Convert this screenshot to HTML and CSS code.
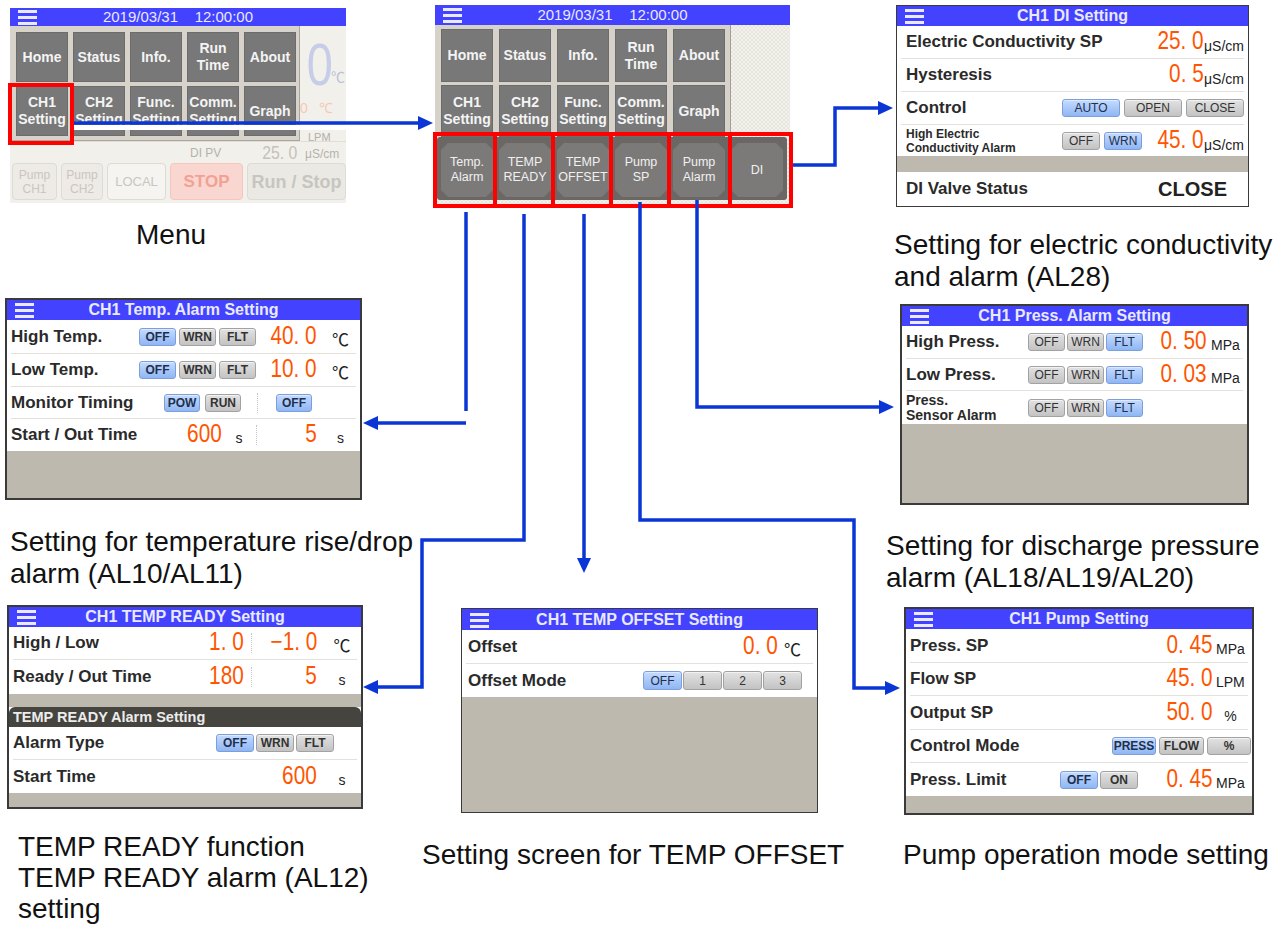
FILE: index.html
```html
<!DOCTYPE html>
<html lang="en">
<head>
  <meta charset="UTF-8">
  <title>CH1 Setting screens</title>
  <link rel="stylesheet" href="styles.css">
</head>
<body>
<div class="canvas">

  <!-- Menu: home screen with the menu open -->
  <div class="screen p-menu">
    <div class="bar clock">
      <svg class="ham" width="19" height="16" viewBox="0 0 19 16"><rect y="1" width="19" height="3"/><rect y="7" width="19" height="3"/><rect y="13" width="19" height="3"/></svg>
      <span class="ttl">2019/03/31&nbsp;&nbsp;&nbsp;&nbsp;12:00:00</span>
    </div>
    <div class="home">
      <div class="home-top">
        <div class="home-side">
          <div class="big-pv"><span class="n">0</span><span class="u">℃</span></div>
          <div class="small-sv">0&nbsp;&nbsp;&nbsp;℃</div>
          <div class="lpm">LPM</div>
        </div>
      </div>
      <div class="home-di">
        <span class="di-l">DI PV</span>
        <span class="di-v"><span class="n">25. 0</span></span>
        <span class="di-u">μS/cm</span>
      </div>
      <div class="home-btns">
        <div class="hb w45">Pump<br>CH1</div>
        <div class="hb w42">Pump<br>CH2</div>
        <div class="hb local w59">LOCAL</div>
        <div class="hb stop w73">STOP</div>
        <div class="hb run">Run / Stop</div>
      </div>
      <div class="pop">
        <div class="mb">Home</div>
        <div class="mb">Status</div>
        <div class="mb">Info.</div>
        <div class="mb">Run<br>Time</div>
        <div class="mb">About</div>
        <div class="mb">CH1<br>Setting</div>
        <div class="mb">CH2<br>Setting</div>
        <div class="mb">Func.<br>Setting</div>
        <div class="mb">Comm.<br>Setting</div>
        <div class="mb">Graph</div>
      </div>
    </div>
  </div>
  <div class="redbox rb-ch1"></div>

  <!-- CH1 setting menu -->
  <div class="screen p-main">
    <div class="bar clock">
      <svg class="ham" width="19" height="16" viewBox="0 0 19 16"><rect y="1" width="19" height="3"/><rect y="7" width="19" height="3"/><rect y="13" width="19" height="3"/></svg>
      <span class="ttl">2019/03/31&nbsp;&nbsp;&nbsp;&nbsp;12:00:00</span>
    </div>
    <div class="main-top">
      <div class="mgrid">
        <div class="mb">Home</div>
        <div class="mb">Status</div>
        <div class="mb">Info.</div>
        <div class="mb">Run<br>Time</div>
        <div class="mb">About</div>
        <div class="mb">CH1<br>Setting</div>
        <div class="mb">CH2<br>Setting</div>
        <div class="mb">Func.<br>Setting</div>
        <div class="mb">Comm.<br>Setting</div>
        <div class="mb">Graph</div>
      </div>
    </div>
    <div class="strip">
      <div class="sb">Temp.<br>Alarm</div>
      <div class="sb">TEMP<br>READY</div>
      <div class="sb">TEMP<br>OFFSET</div>
      <div class="sb">Pump<br>SP</div>
      <div class="sb">Pump<br>Alarm</div>
      <div class="sb">DI</div>
    </div>
  </div>
  <div class="redrow">
    <div class="w64"></div><div class="w62"></div><div class="w62"></div><div class="w62"></div><div class="w65"></div><div class="w65"></div>
  </div>

  <!-- DI setting -->
  <div class="screen p-di">
    <div class="bar">
      <svg class="ham" width="19" height="16" viewBox="0 0 19 16"><rect y="1" width="19" height="3"/><rect y="7" width="19" height="3"/><rect y="13" width="19" height="3"/></svg>
      <span class="ttl">CH1 DI Setting</span>
    </div>
    <div class="row r33">
      <span class="lbl">Electric Conductivity SP</span>
      <span class="cell num w80"><span class="v">25. 0</span></span>
      <span class="cell unit mu w40">μS/cm</span>
    </div>
    <div class="row r33">
      <span class="lbl">Hysteresis</span>
      <span class="cell num w80"><span class="v">0. 5</span></span>
      <span class="cell unit mu w40">μS/cm</span>
    </div>
    <div class="row r33">
      <span class="lbl">Control</span>
      <span class="tgs g4">
        <span class="tg on w58">AUTO</span><span class="tg w58">OPEN</span><span class="tg w58">CLOSE</span>
      </span>
    </div>
    <div class="row r31 last">
      <span class="lbl small">High Electric<br>Conductivity Alarm</span>
      <span class="tgs g4">
        <span class="tg w38">OFF</span><span class="tg on w38">WRN</span>
      </span>
      <span class="cell num w62"><span class="v">45. 0</span></span>
      <span class="cell unit mu w40">μS/cm</span>
    </div>
    <div class="band b16"></div>
    <div class="row grow last">
      <span class="lbl">DI Valve Status</span>
      <span class="state">CLOSE</span>
      <span class="gap w17"></span>
    </div>
  </div>

  <!-- Temp. alarm -->
  <div class="screen p-talarm">
    <div class="bar">
      <svg class="ham" width="19" height="16" viewBox="0 0 19 16"><rect y="1" width="19" height="3"/><rect y="7" width="19" height="3"/><rect y="13" width="19" height="3"/></svg>
      <span class="ttl">CH1 Temp. Alarm Setting</span>
    </div>
    <div class="row r34">
      <span class="lbl">High Temp.</span>
      <span class="tgs">
        <span class="tg on w37">OFF</span><span class="tg w37">WRN</span><span class="tg w37">FLT</span>
      </span>
      <span class="cell num w61"><span class="v">40. 0</span></span>
      <span class="cell unit deg w39 pl8">℃</span>
    </div>
    <div class="row r33">
      <span class="lbl">Low Temp.</span>
      <span class="tgs">
        <span class="tg on w37">OFF</span><span class="tg w37">WRN</span><span class="tg w37">FLT</span>
      </span>
      <span class="cell num w61"><span class="v">10. 0</span></span>
      <span class="cell unit deg w39 pl8">℃</span>
    </div>
    <div class="row r32">
      <span class="lbl">Monitor Timing</span>
      <span class="tg on w36">POW</span>
      <span class="gap w5"></span>
      <span class="tg w36">RUN</span>
      <span class="gap w16"></span>
      <span class="dot"></span>
      <span class="gap w18"></span>
      <span class="tg on w36">OFF</span>
      <span class="gap w44"></span>
    </div>
    <div class="row r32 last">
      <span class="lbl">Start / Out Time</span>
      <span class="cell num w60"><span class="v">600</span></span>
      <span class="cell unit w34">s</span>
      <span class="dot"></span>
      <span class="cell num w60"><span class="v">5</span></span>
      <span class="cell unit w39 pl8">s</span>
    </div>
    <div class="fill"></div>
  </div>

  <!-- Press. alarm -->
  <div class="screen p-palarm">
    <div class="bar">
      <svg class="ham" width="19" height="16" viewBox="0 0 19 16"><rect y="1" width="19" height="3"/><rect y="7" width="19" height="3"/><rect y="13" width="19" height="3"/></svg>
      <span class="ttl">CH1 Press. Alarm Setting</span>
    </div>
    <div class="row r33">
      <span class="lbl">High Press.</span>
      <span class="tgs g2">
        <span class="tg w37">OFF</span><span class="tg w37">WRN</span><span class="tg on w37">FLT</span>
      </span>
      <span class="cell num w64"><span class="v">0. 50</span></span>
      <span class="cell unit left w36 pl4">MPa</span>
    </div>
    <div class="row r32">
      <span class="lbl">Low Press.</span>
      <span class="tgs g2">
        <span class="tg w37">OFF</span><span class="tg w37">WRN</span><span class="tg on w37">FLT</span>
      </span>
      <span class="cell num w64"><span class="v">0. 03</span></span>
      <span class="cell unit left w36 pl4">MPa</span>
    </div>
    <div class="row r33 last">
      <span class="lbl two">Press.<br>Sensor Alarm</span>
      <span class="tgs g2">
        <span class="tg w37">OFF</span><span class="tg w37">WRN</span><span class="tg on w37">FLT</span>
      </span>
      <span class="gap w100"></span>
    </div>
    <div class="fill"></div>
  </div>

  <!-- TEMP READY -->
  <div class="screen p-ready">
    <div class="bar">
      <svg class="ham" width="19" height="16" viewBox="0 0 19 16"><rect y="1" width="19" height="3"/><rect y="7" width="19" height="3"/><rect y="13" width="19" height="3"/></svg>
      <span class="ttl">CH1 TEMP READY Setting</span>
    </div>
    <div class="row r33">
      <span class="lbl">High / Low</span>
      <span class="cell num w60"><span class="v">1. 0</span></span>
      <span class="gap w7"></span>
      <span class="dot"></span>
      <span class="cell num w65"><span class="v">−1. 0</span></span>
      <span class="cell unit deg w40 pl10">℃</span>
    </div>
    <div class="row r34 last">
      <span class="lbl">Ready / Out Time</span>
      <span class="cell num w60"><span class="v">180</span></span>
      <span class="gap w7"></span>
      <span class="dot"></span>
      <span class="cell num w65"><span class="v">5</span></span>
      <span class="cell unit w40 pl10">s</span>
    </div>
    <div class="band b13"></div>
    <div class="hdr">TEMP READY Alarm Setting</div>
    <div class="row r33">
      <span class="lbl">Alarm Type</span>
      <span class="tgs g2">
        <span class="tg on w38">OFF</span><span class="tg w38">WRN</span><span class="tg w38">FLT</span>
      </span>
      <span class="gap w23"></span>
    </div>
    <div class="row r33 last">
      <span class="lbl">Start Time</span>
      <span class="cell num w80"><span class="v">600</span></span>
      <span class="cell unit w40 pl10">s</span>
    </div>
    <div class="fill"></div>
  </div>

  <!-- TEMP OFFSET -->
  <div class="screen p-offset">
    <div class="bar">
      <svg class="ham" width="19" height="16" viewBox="0 0 19 16"><rect y="1" width="19" height="3"/><rect y="7" width="19" height="3"/><rect y="13" width="19" height="3"/></svg>
      <span class="ttl">CH1 TEMP OFFSET Setting</span>
    </div>
    <div class="row r34">
      <span class="lbl">Offset</span>
      <span class="cell num w80"><span class="v">0. 0</span></span>
      <span class="cell unit deg left w35 pl6">℃</span>
    </div>
    <div class="row r33 last">
      <span class="lbl">Offset Mode</span>
      <span class="tgs g1">
        <span class="tg on w39">OFF</span><span class="tg w39">1</span><span class="tg w39">2</span><span class="tg w39">3</span>
      </span>
      <span class="gap w11"></span>
    </div>
    <div class="fill"></div>
  </div>

  <!-- Pump setting -->
  <div class="screen p-pump">
    <div class="bar">
      <svg class="ham" width="19" height="16" viewBox="0 0 19 16"><rect y="1" width="19" height="3"/><rect y="7" width="19" height="3"/><rect y="13" width="19" height="3"/></svg>
      <span class="ttl">CH1 Pump Setting</span>
    </div>
    <div class="row r34">
      <span class="lbl">Press. SP</span>
      <span class="cell num w80"><span class="v">0. 45</span></span>
      <span class="cell unit left w35 pl3">MPa</span>
    </div>
    <div class="row r33">
      <span class="lbl">Flow SP</span>
      <span class="cell num w80"><span class="v">45. 0</span></span>
      <span class="cell unit left w35 pl3">LPM</span>
    </div>
    <div class="row r34">
      <span class="lbl">Output SP</span>
      <span class="cell num w80"><span class="v">50. 0</span></span>
      <span class="cell unit w35">%</span>
    </div>
    <div class="row r33">
      <span class="lbl">Control Mode</span>
      <span class="tgs pull">
        <span class="tg on w44">PRESS</span><span class="tg w45">FLOW</span><span class="tg w44">%</span>
      </span>
    </div>
    <div class="row r33 last">
      <span class="lbl">Press. Limit</span>
      <span class="tgs g2">
        <span class="tg on w38">OFF</span><span class="tg w38">ON</span>
      </span>
      <span class="cell num w75"><span class="v">0. 45</span></span>
      <span class="cell unit left w35 pl3">MPa</span>
    </div>
    <div class="fill"></div>
  </div>

  <!-- captions -->
  <div class="cap c-menu">Menu</div>
  <div class="cap c-di">Setting for electric conductivity<br>and alarm (AL28)</div>
  <div class="cap c-talarm">Setting for temperature rise/drop<br>alarm (AL10/AL11)</div>
  <div class="cap c-palarm">Setting for discharge pressure<br>alarm (AL18/AL19/AL20)</div>
  <div class="cap c-ready">TEMP READY function<br>TEMP READY alarm (AL12)<br>setting</div>
  <div class="cap c-offset">Setting screen for TEMP OFFSET</div>
  <div class="cap c-pump">Pump operation mode setting</div>

  <!-- connector arrows -->
  <svg class="wires" width="1288" height="925" viewBox="0 0 1288 925">
    <rect x="74" y="125" width="346" height="5" fill="#fff"/>
    <g fill="none" stroke="#0b36d6" stroke-width="3.5">
      <path d="M74 123 H420"/>
      <path d="M793 165 H835 V108 H880"/>
      <path d="M466 212 V411"/>
      <path d="M466 423 H376"/>
      <path d="M524 214 V540 H422 V687 H376"/>
      <path d="M584 214 V560"/>
      <path d="M640 202 V520 H854 V688 H887"/>
      <path d="M697 200 V407 H881"/>
    </g>
    <g fill="#0b36d6">
      <polygon points="418,116 433,123 418,130"/>
      <polygon points="878,101 893,108 878,115"/>
      <polygon points="378,416 363,423 378,430"/>
      <polygon points="378,680 363,687 378,694"/>
      <polygon points="577,558 584,573 591,558"/>
      <polygon points="885,681 900,688 885,695"/>
      <polygon points="879,400 894,407 879,414"/>
    </g>
  </svg>

</div>
</body>
</html>
```

FILE: styles.css
```css
body {
  margin: 0;
  background: #fff;
  font-family: "Liberation Sans", Arial, sans-serif;
  color: #111;
}
.canvas {
  position: relative;
  width: 1288px;
  height: 925px;
  overflow: hidden;
}

/* screens */
.screen {
  position: absolute;
  box-sizing: border-box;
  display: flex;
  flex-direction: column;
  background: #fff;
  border: 2px solid #3a3a3a;
  overflow: hidden;
}
.p-menu { left: 10px; top: 8px; width: 336px; height: 195px; border: none; background: #f2f0eb; }
.p-main {
  left: 435px; top: 5px; width: 355px; height: 203px; border: none;
  background: #efece7 repeating-conic-gradient(#e8e5df 0 25%, #f3f1ec 0 50%) 0 0 / 4px 4px;
}
.p-di { left: 896px; top: 5px; width: 353px; height: 202px; border-width: 1px; }
.p-talarm { left: 5px; top: 298px; width: 357px; height: 202px; }
.p-palarm { left: 900px; top: 304px; width: 349px; height: 201px; }
.p-ready { left: 7px; top: 605px; width: 356px; height: 204px; }
.p-offset { left: 461px; top: 608px; width: 357px; height: 205px; border-width: 1px; }
.p-pump { left: 904px; top: 607px; width: 350px; height: 208px; }

.bar {
  flex: none;
  display: grid;
  grid-template-columns: 44px 1fr 44px;
  align-items: center;
  height: 20px;
  background: #4242ff;
  color: #e9e9ff;
  font-size: 16px;
  font-weight: bold;
  line-height: 20px;
}
.bar .ham { display: block; margin-left: 8px; fill: #e9e9ff; }
.bar .ttl { text-align: center; white-space: nowrap; }
.bar.clock { font-weight: normal; font-size: 15px; }
.p-menu .bar { height: 18px; line-height: 18px; }
.p-offset .bar { height: 21px; }

/* rows */
.row {
  flex: none;
  display: flex;
  align-items: center;
  box-sizing: border-box;
  margin: 0 4px;
  border-bottom: 1px solid #e4e1da;
}
.row.last { border-bottom: none; }
.row.grow { flex: 1; }
.r31 { height: 31px; }
.r32 { height: 32px; }
.r33 { height: 33px; }
.r34 { height: 34px; }
.p-di .lbl { padding-left: 5px; }
.p-offset .lbl { padding-left: 2px; }

.lbl {
  flex: 1;
  font-size: 17px;
  font-weight: bold;
  color: #2a2a2a;
  white-space: nowrap;
}
.lbl.two { font-size: 14px; line-height: 15px; }
.lbl.small { font-size: 12px; line-height: 14px; }

.cell { flex: none; box-sizing: border-box; }
.gap { flex: none; }
.num { text-align: right; white-space: nowrap; line-height: 28px; }
.v {
  display: inline-block;
  font-size: 25px;
  color: #ff5500;
  transform: scaleX(.83);
  transform-origin: 100% 50%;
}
.unit { font-size: 14px; color: #222; text-align: center; padding-top: 6px; }
.unit.left { text-align: left; }
.unit.mu { font-size: 14px; padding-top: 8px; text-align: left; }
.deg { font-family: "Noto Sans CJK JP", sans-serif; font-size: 17px; padding-top: 3px; }
.dot { flex: none; height: 20px; border-left: 1px dotted #c4c4c4; }
.state { font-size: 20px; font-weight: bold; color: #222; }

.pl3 { padding-left: 3px; }
.pl4 { padding-left: 4px; }
.pl6 { padding-left: 6px; }
.pl8 { padding-left: 8px; }
.pl10 { padding-left: 10px; }

/* toggle buttons */
.tgs { flex: none; display: flex; gap: 3px; }
.tgs.g1 { gap: 1px; }
.tgs.g2 { gap: 2px; }
.tgs.g4 { gap: 4px; }
.tgs.pull { margin-right: -3px; }
.tg {
  flex: none;
  box-sizing: border-box;
  height: 18px;
  display: flex;
  align-items: center;
  justify-content: center;
  border: 1px solid #a2a2a2;
  border-radius: 3px;
  background: linear-gradient(#e2e2e2, #c3c3c3);
  box-shadow: inset 0 1px 0 #f2f2f2;
  font-size: 12px;
  color: #333;
}
.tg.on {
  border-color: #7c9fdc;
  background: linear-gradient(#c4dbff, #8fb6f4);
  box-shadow: inset 0 1px 0 #dce9ff;
  color: #1f2f4c;
}
.p-talarm .tg, .p-ready .tg, .p-pump .tg { font-weight: bold; }
.p-offset .tg { height: 19px; }

.fill { flex: 1; background: #bdb9ae; }
.band { flex: none; background: #bdb9ae; }
.b13 { height: 13px; }
.b16 { height: 16px; }
.hdr {
  flex: none;
  height: 20px;
  line-height: 20px;
  padding-left: 4px;
  background: #46443e;
  border-radius: 6px 6px 0 0;
  color: #ececec;
  font-size: 14.5px;
  font-weight: bold;
}

/* widths */
.w5 { width: 5px; }
.w7 { width: 7px; }
.w11 { width: 11px; }
.w16 { width: 16px; }
.w17 { width: 17px; }
.w18 { width: 18px; }
.w23 { width: 23px; }
.w34 { width: 34px; }
.w35 { width: 35px; }
.w36 { width: 36px; }
.w37 { width: 37px; }
.w38 { width: 38px; }
.w39 { width: 39px; }
.w40 { width: 40px; }
.w42 { width: 42px; }
.w44 { width: 44px; }
.w45 { width: 45px; }
.w58 { width: 58px; }
.w59 { width: 59px; }
.w60 { width: 60px; }
.w61 { width: 61px; }
.w62 { width: 62px; }
.w64 { width: 64px; }
.w65 { width: 65px; }
.w73 { width: 73px; }
.w75 { width: 75px; }
.w80 { width: 80px; }
.w100 { width: 100px; }

/* home screen behind the menu */
.home { position: relative; flex: 1; display: flex; flex-direction: column; }
.home-top { flex: none; height: 115px; display: flex; justify-content: flex-end; }
.home-side { width: 46px; padding-top: 12px; box-sizing: border-box; }
.big-pv { display: flex; align-items: flex-end; height: 54px; color: #c6cde8; }
.big-pv .n {
  display: inline-block;
  width: 31px;
  font-size: 60px;
  line-height: 54px;
  transform: scaleX(.78);
  transform-origin: 100% 50%;
}
.big-pv .u { font-family: "Noto Sans CJK JP", sans-serif; font-size: 14px; color: #b9c0dc; padding-bottom: 6px; }
.small-sv { margin-top: 6px; font-size: 14px; color: #f6c9b4; }
.lpm { margin-top: 14px; padding-left: 8px; font-size: 11px; color: #b2afa9; }
.home-di {
  flex: none;
  height: 22px;
  display: flex;
  align-items: center;
  box-sizing: border-box;
  padding-left: 180px;
  border-top: 1px solid #e1ded7;
  font-size: 12px;
  color: #b5b2ab;
}
.di-l { width: 32px; }
.di-v { width: 75px; text-align: right; }
.di-v .n {
  display: inline-block;
  font-size: 19px;
  color: #c4c1bb;
  transform: scaleX(.83);
  transform-origin: 100% 50%;
}
.di-u { padding-left: 8px; padding-top: 3px; }
.home-btns { flex: none; height: 37px; display: flex; gap: 4px; padding-left: 2px; }
.hb {
  flex: none;
  box-sizing: border-box;
  display: flex;
  align-items: center;
  justify-content: center;
  text-align: center;
  border: 1px solid #dedbd5;
  border-radius: 4px;
  background: #eeebe6;
  color: #c9c6c0;
  font-size: 12px;
  line-height: 14px;
}
.hb.local { background: #f6f4f0; font-size: 13px; }
.hb.stop { background: #f9d7d0; border-color: #f4c6bd; color: #f3a194; font-size: 17px; font-weight: bold; }
.hb.run { flex: 1; background: #ebe9e4; font-size: 18px; font-weight: bold; color: #c8c5bf; }

.pop {
  position: absolute;
  left: 0;
  top: 0;
  width: 290px;
  height: 115px;
  box-sizing: border-box;
  padding: 6px 0 0 6px;
  display: grid;
  grid-template-columns: repeat(5, 52px);
  grid-template-rows: 50px 50px;
  gap: 4px 5px;
  background: #d7d3ca;
  border-right: 1px solid #a9a59e;
  border-bottom: 1px solid #a9a59e;
}
.mb {
  box-sizing: border-box;
  display: flex;
  align-items: center;
  justify-content: center;
  text-align: center;
  background: #787878;
  border: 1px solid #6c6c6c;
  color: #f4f4f4;
  font-size: 14px;
  font-weight: bold;
  line-height: 17px;
}

/* CH1 setting menu */
.main-top { flex: none; height: 112px; display: flex; }
.mgrid {
  width: 296px;
  box-sizing: border-box;
  padding: 4px 0 0 6px;
  display: grid;
  grid-template-columns: repeat(5, 52px);
  grid-template-rows: 53px 52px;
  gap: 3px 6px;
  background: #d6d2c9;
  border-right: 1px solid #a39f98;
}
.strip {
  flex: none;
  height: 63px;
  margin: 0 3px 0 2px;
  box-sizing: border-box;
  padding: 6px 0 0 4px;
  display: flex;
  gap: 6px;
  align-items: flex-start;
  background: #6b6765;
  border-radius: 3px;
}
.sb {
  flex: none;
  width: 52px;
  height: 54px;
  display: flex;
  align-items: center;
  justify-content: center;
  text-align: center;
  background: #7c7a79;
  clip-path: polygon(7px 0, calc(100% - 7px) 0, 100% 7px, 100% calc(100% - 7px), calc(100% - 7px) 100%, 7px 100%, 0 calc(100% - 7px), 0 7px);
  color: #f0f0f0;
  font-size: 12.5px;
  line-height: 15px;
}

/* red highlight frames */
.redbox { position: absolute; box-sizing: border-box; border: 4px solid #ff0000; }
.rb-ch1 { left: 8px; top: 83px; width: 66px; height: 62px; }
.redrow { position: absolute; left: 433px; top: 132px; height: 76px; display: flex; }
.redrow div { box-sizing: border-box; height: 100%; border: 4px solid #ff0000; margin-left: -4px; }
.redrow div:first-child { margin-left: 0; }

/* captions */
.cap {
  position: absolute;
  font-size: 28px;
  line-height: 32px;
  color: #111;
  white-space: nowrap;
}
.c-menu { left: 136px; top: 219px; }
.c-di { left: 894px; top: 229px; }
.c-talarm { left: 10px; top: 526px; }
.c-palarm { left: 886px; top: 530px; }
.c-ready { left: 18px; top: 831px; line-height: 31px; }
.c-offset { left: 422px; top: 839px; }
.c-pump { left: 903px; top: 839px; }

.wires { position: absolute; left: 0; top: 0; pointer-events: none; }
```
